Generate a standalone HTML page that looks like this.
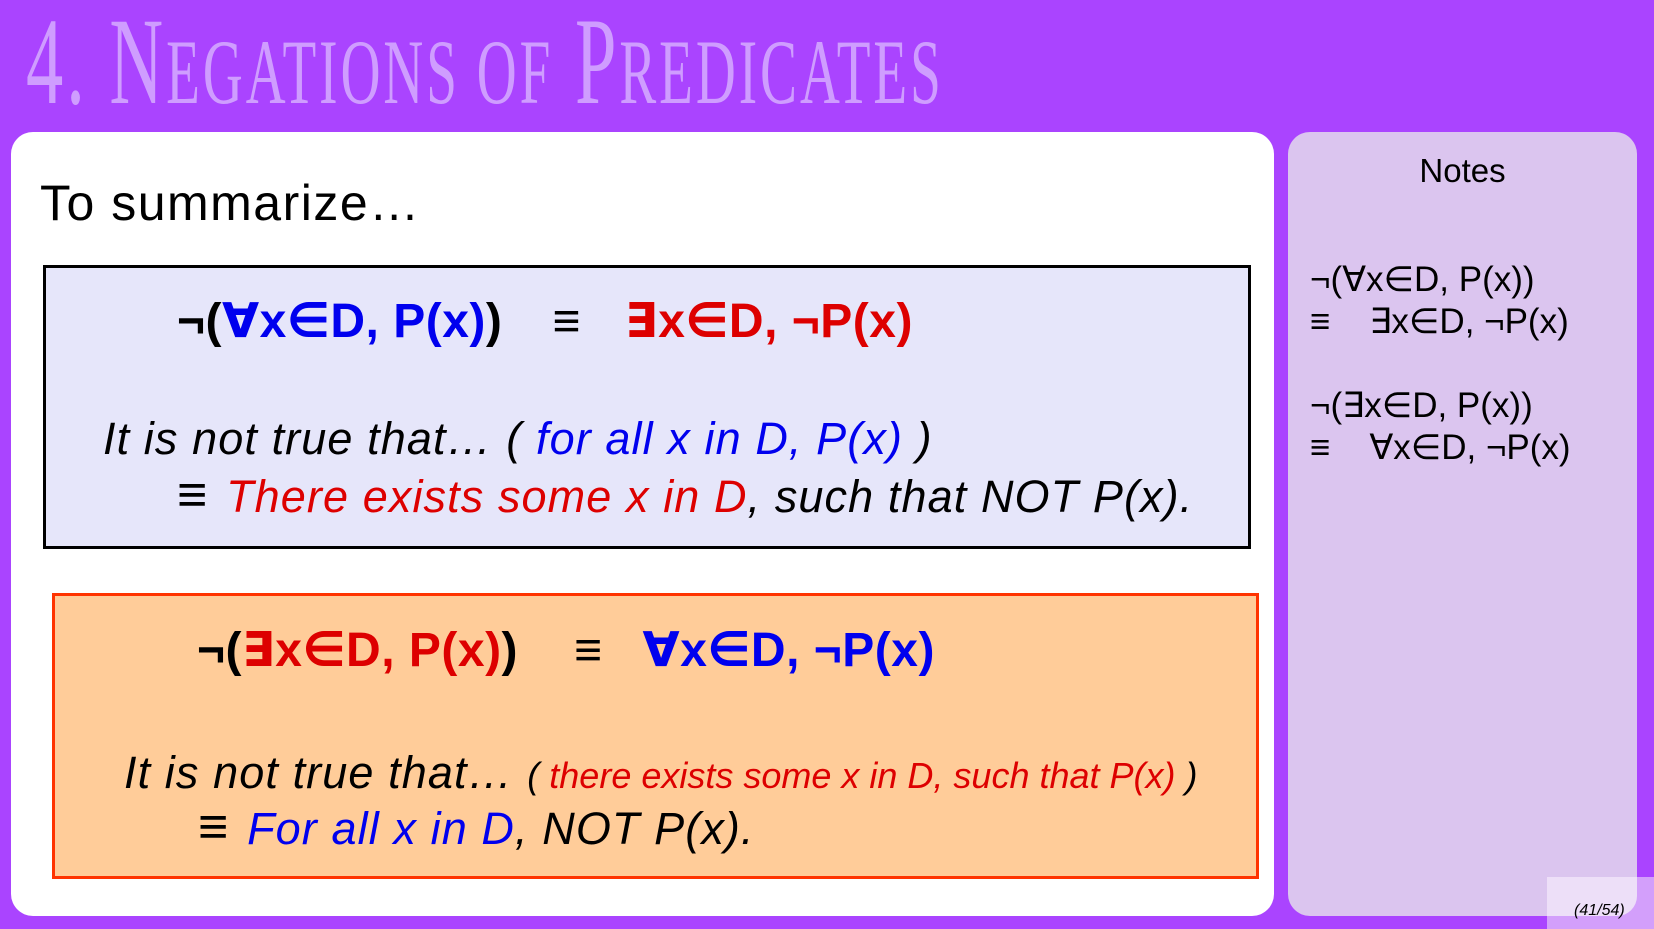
<!DOCTYPE html>
<html><head><meta charset="utf-8"><style>
*{margin:0;padding:0;box-sizing:border-box}
body{width:1654px;height:929px;background:#aa44ff;position:relative;overflow:hidden;font-family:"Liberation Sans","DejaVu Sans",sans-serif}
.a{position:absolute;white-space:nowrap;line-height:1}
.title{left:26px;top:0px;font-family:"Liberation Serif",serif;font-size:124px;color:#cf9dff;transform:scaleX(0.6);transform-origin:left top;letter-spacing:5px}
.title small{font-size:92px}
.main{position:absolute;left:11px;top:132px;width:1263px;height:784px;background:#fff;border-radius:22px}
.notes{position:absolute;left:1288px;top:132px;width:349px;height:784px;background:#dbc5ef;border-radius:22px}
.box1{position:absolute;left:43px;top:265px;width:1208px;height:284px;background:#e6e6fa;border:3px solid #000}
.box2{position:absolute;left:52px;top:593px;width:1207px;height:286px;background:#ffcc99;border:3px solid #ff3300}
.f{font-weight:bold;font-size:48px;letter-spacing:0.5px}
.i{font-style:italic;font-size:45px;letter-spacing:1.1px}
.b{color:#0000ee}.r{color:#dd0000}.k{color:#000}
.n{font-size:35px;color:#000}
.eq{font-style:normal;font-size:52px;margin-right:4px}
</style></head><body>
<div class="a title">4. N<small>EGATIONS OF</small> P<small>REDICATES</small></div>
<div class="main"></div>
<div class="notes"></div>
<div style="position:absolute;left:1547px;top:877px;width:107px;height:52px;background:#d39ffb"></div>
<div style="position:absolute;left:1547px;top:877px;width:90px;height:39px;background:#eddff8;border-bottom-right-radius:20px"></div>
<div class="a" style="left:1574px;top:903px;font-size:16px;font-style:italic">(41/54)</div>

<div class="a" style="left:40px;top:178px;font-size:50px;letter-spacing:1.5px">To summarize…</div>

<div class="box1"></div>
<div class="a f" style="left:177px;top:298px"><span class="k">¬(</span><span class="b">∀x∈D, P(x)</span><span class="k">)</span><span class="k" style="margin:0 44px 0 50px">≡</span><span class="r">∃x∈D, ¬P(x)</span></div>
<div class="a i" style="left:103px;top:416px">It is not true that… ( <span class="b">for all x in D, P(x)</span> )</div>
<div class="a i" style="left:177px;top:469px"><span class="eq">≡</span> <span class="r">There exists some x in D</span>, such that NOT P(x).</div>

<div class="box2"></div>
<div class="a f" style="left:197px;top:627px"><span class="k">¬(</span><span class="r">∃x∈D, P(x)</span><span class="k">)</span><span class="k" style="margin:0 40px 0 56px">≡</span><span class="b">∀x∈D, ¬P(x)</span></div>
<div class="a i" style="left:124px;top:750px">It is not true that… <span style="font-size:36px;letter-spacing:0">( <span class="r">there exists some x in D, such that P(x)</span> )</span></div>
<div class="a i" style="left:198px;top:801px"><span class="eq">≡</span> <span class="b">For all x in D</span>, NOT P(x).</div>

<div class="a" style="left:1288px;width:349px;text-align:center;top:154px;font-size:33px">Notes</div>
<div class="a n" style="left:1310px;top:262px">¬(∀x∈D, P(x))</div>
<div class="a n" style="left:1310px;top:304px">≡&nbsp;&nbsp;&nbsp;&nbsp;∃x∈D, ¬P(x)</div>
<div class="a n" style="left:1310px;top:388px">¬(∃x∈D, P(x))</div>
<div class="a n" style="left:1310px;top:430px">≡&nbsp;&nbsp;&nbsp;&nbsp;∀x∈D, ¬P(x)</div>
</body></html>
